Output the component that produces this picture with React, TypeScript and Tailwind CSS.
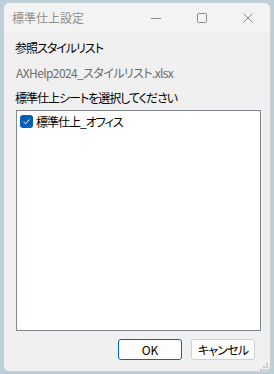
import React from "react";

const FONT = { fontFamily: '"Noto Sans CJK JP", "Noto Sans", sans-serif' };

function TitleButtons() {
  return (
    <div className="flex items-center h-full">
      {/* minimize */}
      <div className="w-[46px] h-full flex items-center justify-center">
        <svg width="12" height="12" viewBox="0 0 12 12">
          <path d="M1 6.5h10" stroke="#8a8a8a" strokeWidth="1" />
        </svg>
      </div>
      {/* maximize */}
      <div className="w-[46px] h-full flex items-center justify-center">
        <svg width="12" height="12" viewBox="0 0 12 12">
          <rect x="1.5" y="1.5" width="9" height="9" rx="1" fill="none" stroke="#8a8a8a" strokeWidth="1" />
        </svg>
      </div>
      {/* close */}
      <div className="w-[46px] h-full flex items-center justify-center">
        <svg width="12" height="12" viewBox="0 0 12 12">
          <path d="M1.5 1.5l9 9M10.5 1.5l-9 9" stroke="#8a8a8a" strokeWidth="1" />
        </svg>
      </div>
    </div>
  );
}

export default function App() {
  return (
    <div
      className="w-[274px] h-[374px] bg-[#bccfd9] pl-[3px] pt-[2px] pr-[3px] pb-[2px] flex [font-feature-settings:'palt']"
      style={FONT}
    >
      <div className="flex-1 flex flex-col rounded-t-[7px] rounded-b-[6px] border border-[#c9d0d4] bg-[#f0f0f0] overflow-hidden">
        {/* Title bar */}
        <div className="h-[29px] shrink-0 flex items-center justify-between bg-[#f3f3f3]">
          <span className="pl-[8px] text-[12px] text-[#8f8f8f] leading-none">標準仕上設定</span>
          <div className="h-full -mr-[1px]">
            <TitleButtons />
          </div>
        </div>

        {/* Body */}
        <div className="flex-1 flex flex-col px-[11px] pt-[7px] text-[12px] leading-none text-black">
          <div className="h-[18px] flex items-center tracking-[-1px]">参照スタイルリスト</div>
          <div className="h-[18px] mt-[7px] flex items-center text-[#6d6d6d] pl-[1px] tracking-[-0.6px]">
            AXHelp2024_スタイルリスト.xlsx
          </div>
          <div className="h-[18px] mt-[7px] flex items-center tracking-[-1px]">標準仕上シートを選択してください</div>

          {/* List box */}
          <div className="mt-[3px] ml-[1px] w-[245px] h-[221px] border border-[#828790] bg-white pt-[3px] pl-[3px]">
            <div className="flex items-center gap-[3px] h-[15px]">
              <div className="w-[13px] h-[13px] rounded-[3px] bg-[#005fb8] flex items-center justify-center">
                <svg width="9" height="9" viewBox="0 0 9 9">
                  <path d="M1.5 4.8l2 2 4-4.3" fill="none" stroke="#ffffff" strokeWidth="1" />
                </svg>
              </div>
              <span className="tracking-[-1px]">標準仕上_オフィス</span>
            </div>
          </div>

          {/* Buttons */}
          <div className="flex justify-end gap-[9px] mt-[8px] pr-[4px]">
            <button className="w-[64px] h-[21px] rounded-[3px] border border-[#0067c0] bg-[#fdfdfd] text-[12px] leading-none text-black">
              OK
            </button>
            <button className="w-[64px] h-[21px] rounded-[3px] border border-[#d0d0d0] bg-[#fdfdfd] text-[12px] leading-none text-black tracking-[-0.8px]">
              キャンセル
            </button>
          </div>

          {/* Resize grip */}
          <div className="flex justify-end mt-[3px] -mr-[9px]">
            <svg width="8" height="8" viewBox="0 0 8 8">
              <rect x="6" y="0" width="2" height="2" fill="#c4c4c4" />
              <rect x="3" y="3" width="2" height="2" fill="#c4c4c4" />
              <rect x="6" y="3" width="2" height="2" fill="#c4c4c4" />
              <rect x="0" y="6" width="2" height="2" fill="#c4c4c4" />
              <rect x="3" y="6" width="2" height="2" fill="#c4c4c4" />
              <rect x="6" y="6" width="2" height="2" fill="#c4c4c4" />
            </svg>
          </div>
        </div>
      </div>
    </div>
  );
}
